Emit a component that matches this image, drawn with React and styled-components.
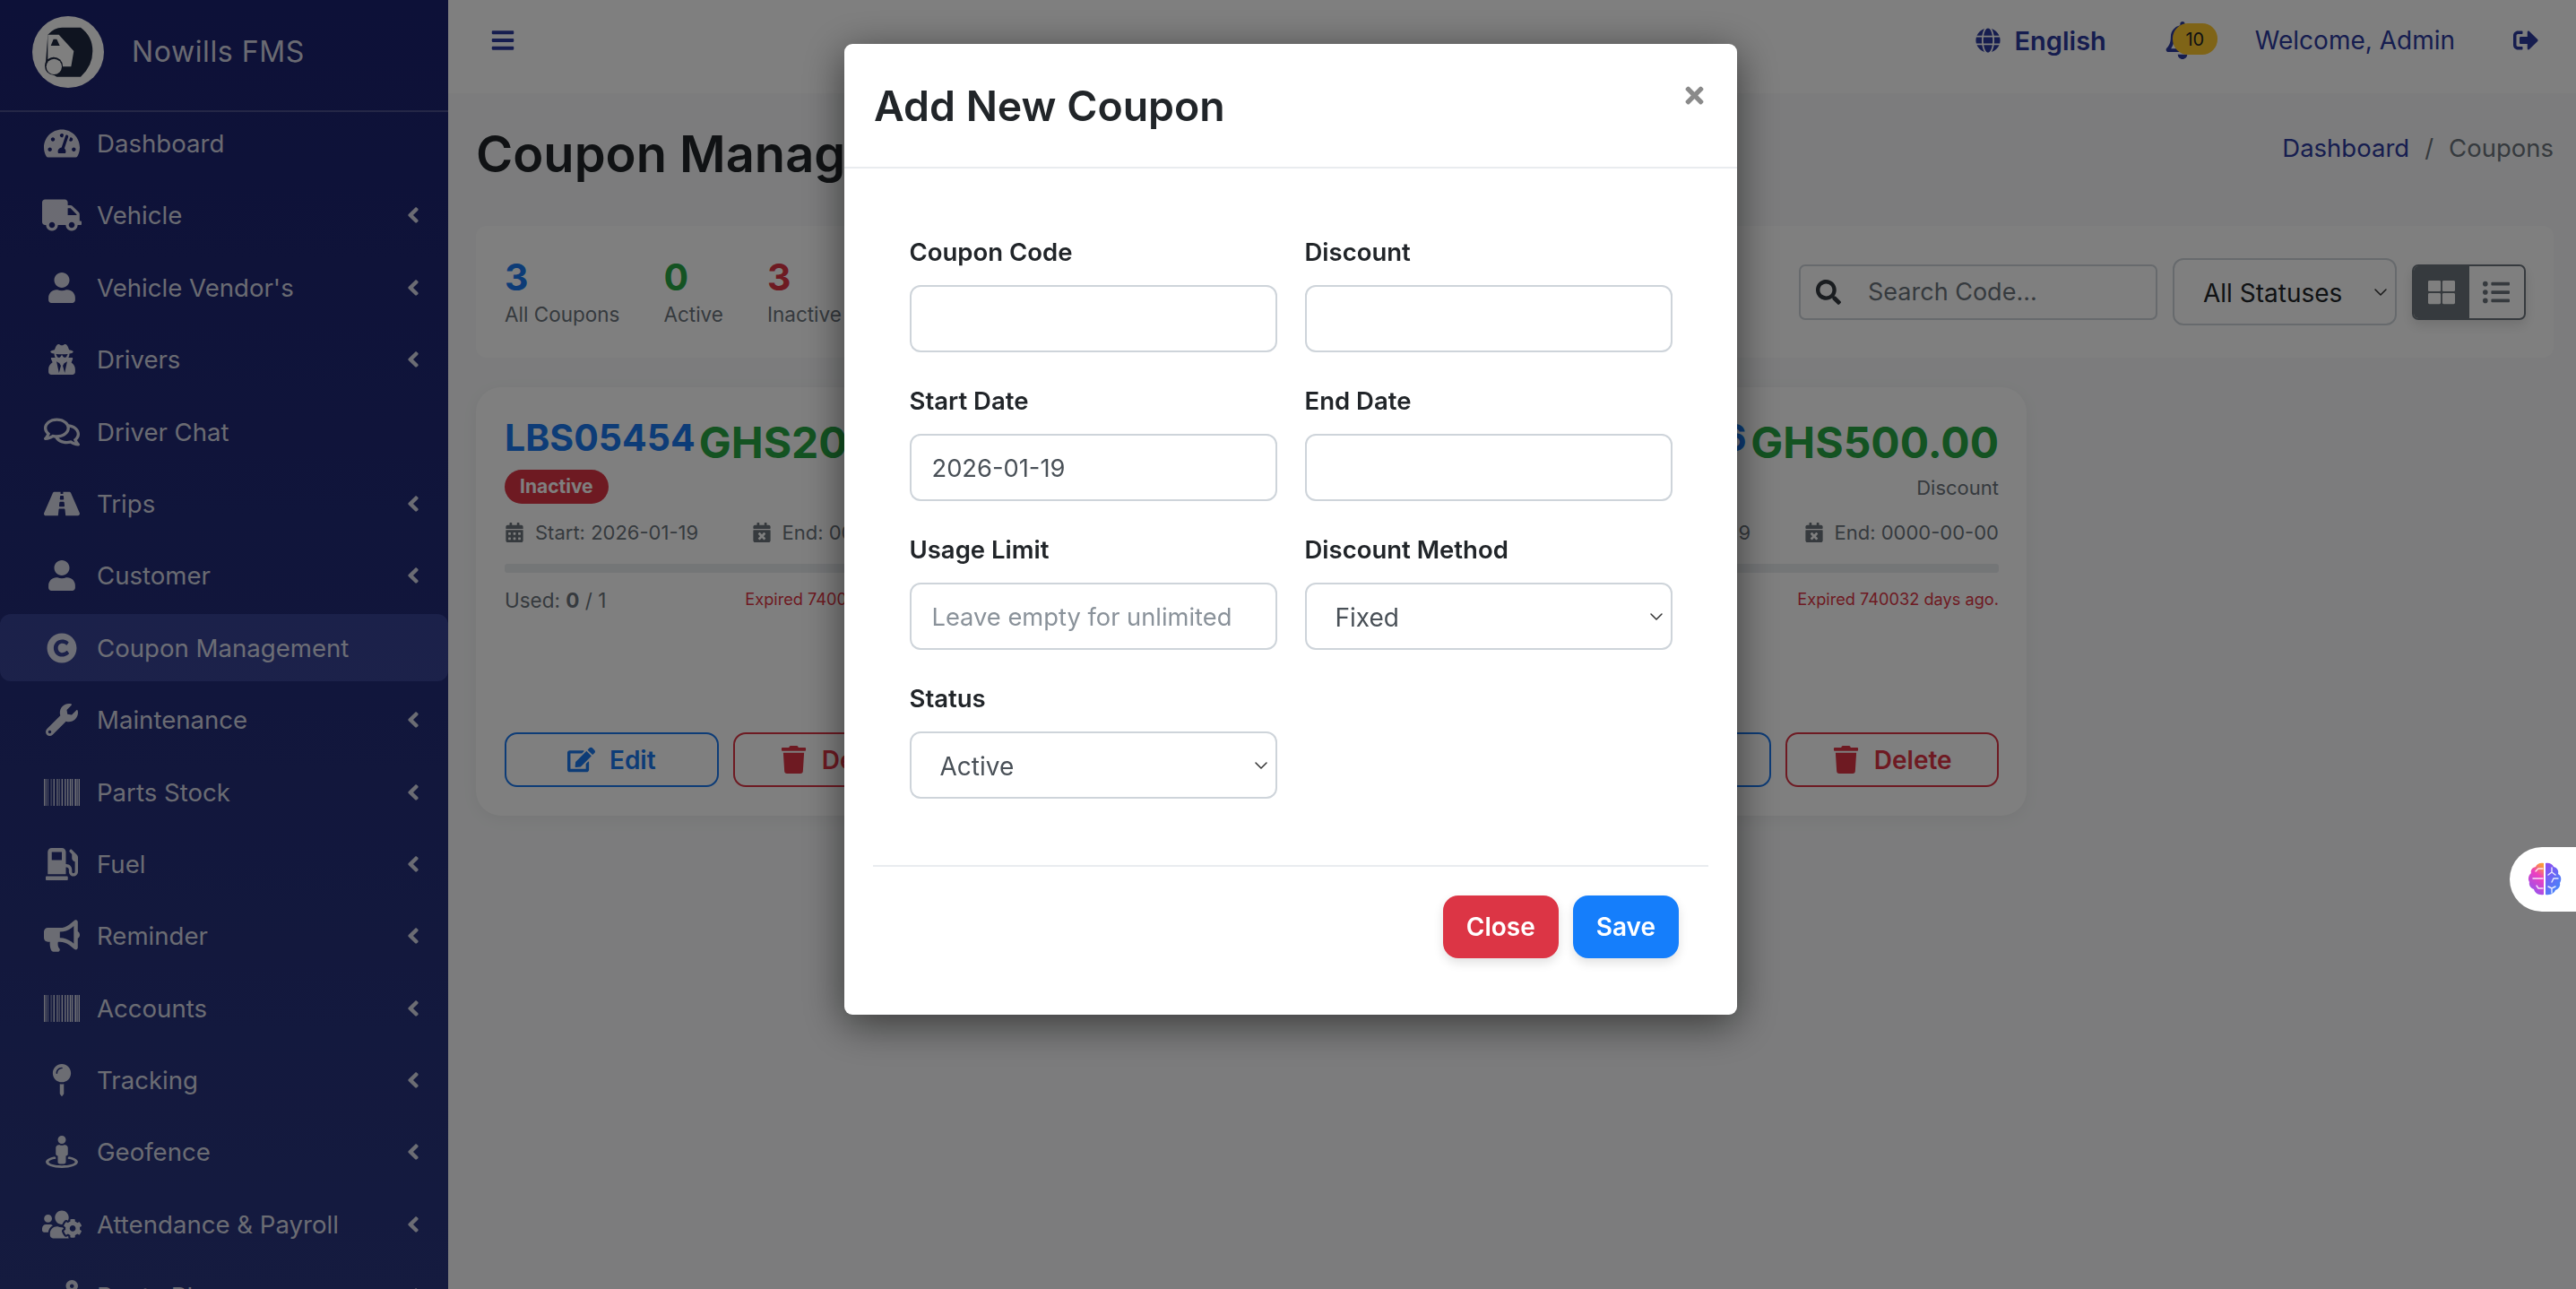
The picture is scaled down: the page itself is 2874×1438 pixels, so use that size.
import React from 'react';
import styled, { createGlobalStyle } from 'styled-components';
import {
  FaTachometerAlt, FaTruck, FaUser, FaUserSecret, FaRegComments, FaRoad, FaWrench,
  FaBarcode, FaGasPump, FaBullhorn, FaMapPin, FaStreetView, FaUsersCog, FaRoute,
  FaAngleLeft, FaBars, FaGlobe, FaRegBell, FaSignOutAlt, FaSearch, FaThLarge, FaListUl,
  FaCalendarAlt, FaCalendarTimes, FaEdit, FaTrash, FaTimes, FaCopyright,
} from 'react-icons/fa';
import { LuChevronDown } from 'react-icons/lu';

const GlobalStyle = createGlobalStyle`
  html, body { margin: 0; padding: 0; height: 100%; overflow: hidden; }
  body { font-family: Inter, "Liberation Sans", sans-serif; background: #f8f9fa; color: #212529; }
  * { box-sizing: border-box; }
`;

const Page = styled.div`
  display: flex;
  height: 1438px;
  overflow: hidden;
`;

const Sidebar = styled.aside`
  flex: 0 0 500px;
  height: 100%;
  overflow: hidden;
  background: linear-gradient(180deg, #1b2270 0%, #2a367f 100%);
  color: rgba(255, 255, 255, 0.82);
`;

const Brand = styled.div`
  display: flex;
  align-items: center;
  gap: 31px;
  height: 125px;
  padding: 0 36px 8px;
  border-bottom: 2px solid rgba(255, 255, 255, 0.2);
  font-size: 32px;
  letter-spacing: 0.6px;
`;

const Nav = styled.nav`
  display: flex;
  flex-direction: column;
  gap: 5.4px;
  margin-top: -2.5px;
`;

const NavItem = styled.div`
  display: flex;
  align-items: center;
  flex: 0 0 75px;
  padding: 0 25px 0 47px;
  font-size: 27.6px;
  background: ${(p) => (p.$active ? 'rgba(130,150,255,0.22)' : 'transparent')};
  border-radius: 12px;
`;

const NavIcon = styled.span`
  display: flex;
  justify-content: center;
  flex: 0 0 44px;
  margin-right: 17px;
  font-size: ${(p) => p.$size || 38}px;
`;

const NavText = styled.span`
  flex: 1;
`;

const Chevron = styled(FaAngleLeft)`
  font-size: 28px;
`;

const Main = styled.main`
  flex: 1;
  min-width: 0;
`;

const Topbar = styled.header`
  display: flex;
  align-items: center;
  height: 104px;
  padding: 0 42px 14px 47px;
  background: #fff;
  color: #2c3a9f;
  font-size: 28px;
`;

const Hamburger = styled(FaBars)`
  font-size: 28px;
  margin-right: auto;
`;

const Lang = styled.span`
  display: flex;
  align-items: center;
  gap: 16px;
  font-weight: 600;
  font-size: 29px;
  margin-right: 64px;
  svg { font-size: 28px; }
`;

const BellWrap = styled.span`
  position: relative;
  display: flex;
  width: 60px;
  margin-right: 42px;
  svg { font-size: 42px; }
`;

const BellBadge = styled.span`
  position: absolute;
  left: 10px;
  top: 2px;
  display: flex;
  align-items: center;
  justify-content: center;
  width: 50px;
  height: 35px;
  border-radius: 17px;
  background: #ffc82e;
  color: #212529;
  font-size: 20px;
`;

const LogoutIcon = styled(FaSignOutAlt)`
  font-size: 28px;
  margin-left: 65px;
`;

const Content = styled.div`
  padding: 0 25px 0 31px;
`;

const TitleRow = styled.div`
  display: flex;
  justify-content: space-between;
  align-items: flex-start;
  height: 148px;
  padding-top: 34px;
`;

const PageTitle = styled.h1`
  margin: 2px 0 0;
  font-size: 56px;
  font-weight: 600;
  line-height: 64px;
  white-space: nowrap;
`;

const Breadcrumb = styled.div`
  display: flex;
  gap: 17px;
  font-size: 27.5px;
  line-height: 54px;
  color: #6c757d;
  a { color: #2c3a9f; }
`;

const StatsPanel = styled.section`
  display: flex;
  align-items: center;
  justify-content: space-between;
  height: 147px;
  padding: 0 31px 0 32px;
  background: #fff;
  border-radius: 12px;
`;

const Stats = styled.div`
  display: flex;
  gap: 49px;
  margin-top: -2px;
`;

const Stat = styled.div`
  display: flex;
  flex-direction: column;
`;

const StatValue = styled.span`
  font-size: 41px;
  font-weight: 700;
  line-height: 50px;
  color: ${(p) => p.$color};
`;

const StatLabel = styled.span`
  font-size: 22.5px;
  line-height: 28px;
  margin-top: 3px;
  color: #6c757d;
`;

const Controls = styled.div`
  display: flex;
  align-items: center;
  gap: 17px;
`;

const SearchBox = styled.label`
  display: flex;
  align-items: center;
  gap: 30px;
  width: 400px;
  height: 62px;
  padding: 0 17px;
  border: 2px solid #ced4da;
  border-radius: 7px;
  color: #343a40;
  svg { flex: none; font-size: 28px; }
`;

const SearchInput = styled.input`
  flex: 1;
  min-width: 0;
  border: 0;
  outline: 0;
  padding: 0;
  background: transparent;
  font: 400 27px Inter, "Liberation Sans", sans-serif;
  &::placeholder { color: #6c757d; opacity: 1; }
`;

const SelectWrap = styled.div`
  position: relative;
  width: ${(p) => p.$width || '100%'};
`;

const Select = styled.select`
  appearance: none;
  display: block;
  width: 100%;
  height: 75px;
  padding: 2px 0 0 32px;
  border: 2px solid #ced4da;
  border-radius: 12px;
  background: #fff;
  color: ${(p) => p.$color || '#495057'};
  font: 400 28px Inter, "Liberation Sans", sans-serif;
`;

const SelectArrow = styled(LuChevronDown)`
  position: absolute;
  right: 6px;
  top: 50%;
  transform: translateY(-50%);
  font-size: 24px;
  color: #333;
  stroke-width: 1.5;
  pointer-events: none;
`;

const ViewToggle = styled.div`
  display: flex;
  width: 127px;
  height: 62px;
  border: 2px solid #6c757d;
  border-radius: 7px;
  overflow: hidden;
  box-shadow: 0 6px 14px rgba(0, 0, 0, 0.12);
`;

const ViewButton = styled.span`
  display: flex;
  align-items: center;
  justify-content: center;
  flex: 1;
  font-size: 30px;
  background: ${(p) => (p.$active ? '#6c757d' : 'transparent')};
  color: ${(p) => (p.$active ? '#fff' : '#6c757d')};
`;

const CardRow = styled.section`
  display: grid;
  grid-template-columns: repeat(3, 556px);
  gap: 31px;
  margin-top: 33px;
`;

const Card = styled.article`
  display: flex;
  flex-direction: column;
  height: 478px;
  padding: 31px 31px 32px 32px;
  background: #fff;
  border-radius: 28px;
  box-shadow: 0 4px 18px rgba(0, 0, 0, 0.05);
`;

const CardHead = styled.div`
  display: flex;
  justify-content: space-between;
`;

const CodeCol = styled.div`
  display: flex;
  flex-direction: column;
  align-items: flex-start;
`;

const Code = styled.span`
  font-size: 41px;
  font-weight: 700;
  line-height: 50px;
  color: #1a78ee;
`;

const StatusBadge = styled.span`
  margin-top: 11px;
  padding: 0 17px;
  height: 38px;
  line-height: 38px;
  border-radius: 19px;
  background: #dc3545;
  color: #fff;
  font-size: 21px;
  font-weight: 700;
`;

const AmountCol = styled.div`
  display: flex;
  flex-direction: column;
  align-items: flex-end;
`;

const Amount = styled.span`
  font-size: 48px;
  font-weight: 700;
  line-height: 56px;
  margin-top: 3px;
  margin-bottom: -3px;
  color: #28a745;
  white-space: nowrap;
`;

const AmountLabel = styled.span`
  margin-top: 10px;
  font-size: 22px;
  line-height: 30px;
  color: #6c757d;
`;

const DateRow = styled.div`
  display: flex;
  justify-content: space-between;
  margin-top: 17px;
  font-size: 22px;
  line-height: 30px;
  color: #6c757d;
`;

const DateItem = styled.span`
  display: flex;
  align-items: center;
  gap: 12px;
  svg { font-size: 22px; }
`;

const Progress = styled.div`
  height: 10px;
  margin-top: 20px;
  background: #e9ecef;
  border-radius: 3px;
`;

const UsedRow = styled.div`
  display: flex;
  justify-content: space-between;
  margin-top: 16px;
  font-size: 22.5px;
  line-height: 30px;
  color: #6c757d;
`;

const Expired = styled.span`
  font-size: 18.2px;
  line-height: 26px;
  color: #dc3545;
`;

const CardActions = styled.div`
  display: grid;
  grid-template-columns: 1fr 1fr;
  gap: 16px;
  margin-top: auto;
`;

const OutlineButton = styled.button`
  display: flex;
  align-items: center;
  justify-content: center;
  gap: 16px;
  height: 61px;
  border: 2px solid ${(p) => p.$color};
  border-radius: 14px;
  background: transparent;
  color: ${(p) => p.$color};
  font: 600 28px Inter, "Liberation Sans", sans-serif;
  svg { font-size: 31px; }
`;

const Backdrop = styled.div`
  position: fixed;
  inset: 0;
  background: rgba(0, 0, 0, 0.5);
`;

const Modal = styled.div`
  position: fixed;
  top: 49px;
  left: 942px;
  width: 996px;
  height: 1083px;
  background: #fff;
  border-radius: 9px;
  box-shadow: 0 10px 46px rgba(0, 0, 0, 0.55);
`;

const ModalHeader = styled.div`
  display: flex;
  align-items: flex-start;
  justify-content: space-between;
  height: 139px;
  padding: 0 33px 0 33px;
  border-bottom: 2px solid #e9ecef;
`;

const ModalTitle = styled.h2`
  margin: 39px 0 0;
  font-size: 46.4px;
  font-weight: 600;
  line-height: 60px;
`;

const CloseIcon = styled(FaTimes)`
  margin-top: 43px;
  font-size: 29px;
  color: #8a8a8a;
`;

const FormGrid = styled.div`
  display: grid;
  grid-template-columns: 410px 410px;
  column-gap: 31px;
  row-gap: 34px;
  padding: 73px 73px 0 72.5px;
`;

const Field = styled.div`
  display: flex;
  flex-direction: column;
  gap: 17px;
`;

const Label = styled.label`
  font-size: 27.5px;
  font-weight: 600;
  line-height: 40px;
`;

const TextInput = styled.input`
  width: 100%;
  height: 75px;
  padding: 2px 23px 0;
  border: 2px solid #ced4da;
  border-radius: 12px;
  outline: 0;
  color: #495057;
  font: 400 27.3px Inter, "Liberation Sans", sans-serif;
  &::placeholder { color: #8a929a; opacity: 1; }
`;

const ModalFooter = styled.div`
  display: flex;
  justify-content: flex-end;
  gap: 16px;
  margin: 74px 32px 0;
  padding: 32px 33px 0 0;
  border-top: 2px solid #e9ecef;
`;

const SolidButton = styled.button`
  height: 70px;
  padding: 0 26px;
  border: 0;
  border-radius: 17px;
  background: ${(p) => p.$color};
  color: #fff;
  font: 600 28px Inter, "Liberation Sans", sans-serif;
  box-shadow: 0 5px 12px rgba(0, 0, 0, 0.12);
`;

const AiTab = styled.div`
  position: fixed;
  right: 0;
  top: 945px;
  display: flex;
  align-items: center;
  width: 74px;
  height: 72px;
  padding-left: 20px;
  background: #fff;
  border-radius: 36px 0 0 36px;
`;

const menu = [
  { icon: FaTachometerAlt, label: 'Dashboard', plain: true, size: 40 },
  { icon: FaTruck, label: 'Vehicle', size: 44 },
  { icon: FaUser, label: "Vehicle Vendor's", size: 34 },
  { icon: FaUserSecret, label: 'Drivers', size: 34 },
  { icon: FaRegComments, label: 'Driver Chat', plain: true, size: 40 },
  { icon: FaRoad, label: 'Trips', size: 40 },
  { icon: FaUser, label: 'Customer', size: 34 },
  { icon: FaCopyright, label: 'Coupon Management', plain: true, active: true, size: 34 },
  { icon: FaWrench, label: 'Maintenance', size: 36 },
  { icon: FaBarcode, label: 'Parts Stock', size: 40 },
  { icon: FaGasPump, label: 'Fuel', size: 36 },
  { icon: FaBullhorn, label: 'Reminder', size: 40 },
  { icon: FaBarcode, label: 'Accounts', size: 40 },
  { icon: FaMapPin, label: 'Tracking', size: 36 },
  { icon: FaStreetView, label: 'Geofence', size: 36 },
  { icon: FaUsersCog, label: 'Attendance & Payroll', size: 44 },
  { icon: FaRoute, label: 'Route Plan', size: 36 },
];

const coupons = [
  { code: 'LBS05454', amount: 'GHS200.00', start: '2026-01-19', end: '0000-00-00', used: '1', days: '740032' },
  { code: 'LBS05455', amount: 'GHS300.00', start: '2026-01-19', end: '0000-00-00', used: '1', days: '740032' },
  { code: 'LBS05456', amount: 'GHS500.00', start: '2026-01-19', end: '0000-00-00', used: '1', days: '740032' },
];

const Logo = () => (
  <svg width="80" height="80" viewBox="48 23 240 240" style={{ flex: 'none' }}>
    <circle cx="168" cy="143" r="120" fill="#fff" />
    <path d="M100 85Q122 60 150 61L210 61Q250 90 250 140Q250 190 210 226L130 226Q100 210 92 190Z" fill="#1e2840" />
    <path d="M100 85L137 85L187 140L178 192L150 192L120 160L100 168Z" fill="#fff" />
    <path d="M110 122L119 100L130 100L140 122Z" fill="#1e2840" />
    <circle cx="120" cy="190" r="30" fill="#1e2840" />
    <circle cx="121" cy="192" r="26" fill="#fff" />
  </svg>
);

const Brain = () => (
  <svg width="38" height="38" viewBox="0 0 38 38">
    <defs>
      <linearGradient id="brainLeft" x1="0.7" y1="0" x2="0.3" y2="1">
        <stop offset="0" stopColor="#fb9a3c" />
        <stop offset="0.35" stopColor="#ee3fc0" />
        <stop offset="1" stopColor="#8f55f2" />
      </linearGradient>
      <linearGradient id="brainRight" x1="0.2" y1="0" x2="0.8" y2="1">
        <stop offset="0" stopColor="#8a4df0" />
        <stop offset="1" stopColor="#3f8cfb" />
      </linearGradient>
    </defs>
    <path d="M18 1C14 0 10 2 9 5 5 6 3 9 4 12 1 14 0 19 2 22 1 26 4 29 7 30 8 34 12 37 18 36Z" fill="url(#brainLeft)" />
    <path d="M20 1C24 0 28 2 29 5 33 6 35 9 34 13 38 15 38 20 36 23 37 27 34 30 31 31 30 34 26 37 20 36Z" fill="url(#brainRight)" />
    <g fill="none" stroke="#fff" strokeWidth="1.4" strokeLinecap="round" opacity="0.85">
      <path d="M17 7H12L9 10M17 18H6M17 29H12L10 26" />
      <path d="M27 6V11M27 11L23 14M27 11L31 14M34 18H29L27 22M23 27L27 29V34M27 29L31 27" />
    </g>
  </svg>
);

const CouponCard = ({ coupon }) => (
  <Card>
    <CardHead>
      <CodeCol>
        <Code>{coupon.code}</Code>
        <StatusBadge>Inactive</StatusBadge>
      </CodeCol>
      <AmountCol>
        <Amount>{coupon.amount}</Amount>
        <AmountLabel>Discount</AmountLabel>
      </AmountCol>
    </CardHead>
    <DateRow>
      <DateItem><FaCalendarAlt />Start: {coupon.start}</DateItem>
      <DateItem><FaCalendarTimes />End: {coupon.end}</DateItem>
    </DateRow>
    <Progress />
    <UsedRow>
      <span>Used: <b>0</b> / {coupon.used}</span>
      <Expired>Expired {coupon.days} days ago.</Expired>
    </UsedRow>
    <CardActions>
      <OutlineButton $color="#1a78ee"><FaEdit />Edit</OutlineButton>
      <OutlineButton $color="#dc3545"><FaTrash />Delete</OutlineButton>
    </CardActions>
  </Card>
);

export default function App() {
  return (
    <>
      <GlobalStyle />
      <Page>
        <Sidebar>
          <Brand><Logo />Nowills FMS</Brand>
          <Nav>
            {menu.map((item) => (
              <NavItem key={item.label} $active={item.active}>
                <NavIcon $size={item.size}><item.icon /></NavIcon>
                <NavText>{item.label}</NavText>
                {!item.plain && <Chevron />}
              </NavItem>
            ))}
          </Nav>
        </Sidebar>
        <Main>
          <Topbar>
            <Hamburger />
            <Lang><FaGlobe />English</Lang>
            <BellWrap><FaRegBell /><BellBadge>10</BellBadge></BellWrap>
            <span>Welcome, Admin</span>
            <LogoutIcon />
          </Topbar>
          <Content>
            <TitleRow>
              <PageTitle>Coupon Management</PageTitle>
              <Breadcrumb><a>Dashboard</a><span>/</span><span>Coupons</span></Breadcrumb>
            </TitleRow>
            <StatsPanel>
              <Stats>
                <Stat><StatValue $color="#1a78ee">3</StatValue><StatLabel>All Coupons</StatLabel></Stat>
                <Stat><StatValue $color="#28a745">0</StatValue><StatLabel>Active</StatLabel></Stat>
                <Stat><StatValue $color="#dc3545">3</StatValue><StatLabel>Inactive</StatLabel></Stat>
              </Stats>
              <Controls>
                <SearchBox><FaSearch /><SearchInput placeholder="Search Code..." /></SearchBox>
                <SelectWrap $width="250px">
                  <Select $color="#212529"><option>All Statuses</option></Select>
                  <SelectArrow />
                </SelectWrap>
                <ViewToggle>
                  <ViewButton $active><FaThLarge /></ViewButton>
                  <ViewButton><FaListUl /></ViewButton>
                </ViewToggle>
              </Controls>
            </StatsPanel>
            <CardRow>
              {coupons.map((c) => <CouponCard key={c.code} coupon={c} />)}
            </CardRow>
          </Content>
        </Main>
      </Page>
      <Backdrop />
      <Modal>
        <ModalHeader>
          <ModalTitle>Add New Coupon</ModalTitle>
          <CloseIcon />
        </ModalHeader>
        <FormGrid>
          <Field><Label>Coupon Code</Label><TextInput /></Field>
          <Field><Label>Discount</Label><TextInput /></Field>
          <Field><Label>Start Date</Label><TextInput defaultValue="2026-01-19" /></Field>
          <Field><Label>End Date</Label><TextInput /></Field>
          <Field><Label>Usage Limit</Label><TextInput placeholder="Leave empty for unlimited" /></Field>
          <Field>
            <Label>Discount Method</Label>
            <SelectWrap><Select><option>Fixed</option></Select><SelectArrow /></SelectWrap>
          </Field>
          <Field>
            <Label>Status</Label>
            <SelectWrap><Select><option>Active</option></Select><SelectArrow /></SelectWrap>
          </Field>
        </FormGrid>
        <ModalFooter>
          <SolidButton $color="#dc3545">Close</SolidButton>
          <SolidButton $color="#157efb">Save</SolidButton>
        </ModalFooter>
      </Modal>
      <AiTab><Brain /></AiTab>
    </>
  );
}
